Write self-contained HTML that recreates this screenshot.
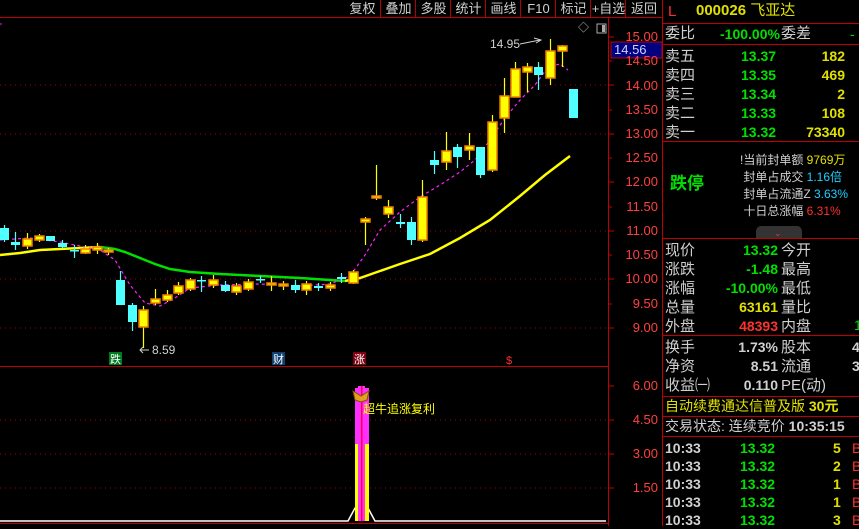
<!DOCTYPE html>
<html><head><meta charset="utf-8"><style>
body{margin:0;background:#000;width:859px;height:526px;overflow:hidden;position:relative;font-family:"Liberation Sans","Noto Sans CJK SC",sans-serif;}
.t{position:absolute;white-space:nowrap;font-size:14px;line-height:16px;}
.w{color:#d0d0d0}.g{color:#00e000}.y{color:#e0e000}.r{color:#ff3030}.c{color:#20d0ff}
.tb{position:absolute;top:0;height:17px;font-size:13px;line-height:17px;color:#d0d0d0;text-align:center;border-left:1px solid #b00000}
.hl{position:absolute;left:662px;width:197px;height:1px;background:#c00000}
.ax{position:absolute;left:612px;width:46px;text-align:right;font-size:13px;color:#ff4040;line-height:14px}
</style></head><body>
<svg width="859" height="526" style="position:absolute;left:0;top:0">
<line x1="0" y1="17.5" x2="662" y2="17.5" stroke="#c00000"/>
<line x1="608.5" y1="18" x2="608.5" y2="526" stroke="#c00000"/>
<line x1="662.5" y1="0" x2="662.5" y2="526" stroke="#c00000"/>
<line x1="0" y1="366.5" x2="608" y2="366.5" stroke="#c00000"/>
<line x1="0" y1="523.5" x2="608" y2="523.5" stroke="#c00000"/>
<g stroke="#a00000" stroke-dasharray="1,4">
<line x1="0" y1="85" x2="606" y2="85"/><line x1="0" y1="134" x2="606" y2="134"/>
<line x1="0" y1="231" x2="606" y2="231"/><line x1="0" y1="279" x2="606" y2="279"/>
<line x1="0" y1="328" x2="606" y2="328"/>
<line x1="0" y1="420" x2="606" y2="420"/><line x1="0" y1="454" x2="606" y2="454"/><line x1="0" y1="488" x2="606" y2="488"/>
</g>
<g stroke="#c00000">
<line x1="608" y1="37" x2="614" y2="37"/><line x1="608" y1="61" x2="612" y2="61"/><line x1="608" y1="85" x2="614" y2="85"/><line x1="608" y1="110" x2="612" y2="110"/><line x1="608" y1="134" x2="614" y2="134"/><line x1="608" y1="158" x2="612" y2="158"/><line x1="608" y1="182" x2="614" y2="182"/><line x1="608" y1="207" x2="612" y2="207"/><line x1="608" y1="231" x2="614" y2="231"/><line x1="608" y1="255" x2="612" y2="255"/><line x1="608" y1="279" x2="614" y2="279"/><line x1="608" y1="304" x2="612" y2="304"/><line x1="608" y1="328" x2="614" y2="328"/>
<line x1="608" y1="386" x2="614" y2="386"/><line x1="608" y1="420" x2="614" y2="420"/><line x1="608" y1="454" x2="614" y2="454"/><line x1="608" y1="488" x2="614" y2="488"/>
</g>
<!-- MA lines -->
<polyline fill="none" stroke="#ffff00" stroke-width="2.5" points="0,255 20,253 40,250 60,249 80,248 100,247"/>
<polyline fill="none" stroke="#00e000" stroke-width="2.5" points="100,247 115,249 125,252 140,258 155,264 170,269 190,272 220,274 260,276 300,278 345,281"/>
<polyline fill="none" stroke="#ffff00" stroke-width="2.5" points="345,281 360,278 380,271 400,264 430,254 460,238 490,220 520,196 545,175 570,156"/>
<polyline fill="none" stroke="#ff20ff" stroke-width="1.2" stroke-dasharray="3,3" points="0,240 30,238 60,242 100,250 115,260 130,285 145,303 160,306 175,298 190,288 220,285 260,284 300,286 330,284 350,276 365,255 380,230 400,212 420,197 440,185 460,172 475,160 490,140 505,118 520,100 535,85 548,67 560,64 568,70"/>
<!-- candles -->
<g id="cd"></g>
<!-- annotations -->
<text x="490" y="48" fill="#d0d0d0" font-size="12" font-family="Liberation Sans">14.95</text>
<path d="M520 44 L540 40 M534 38 L541 40 L536 43" stroke="#d0d0d0" fill="none"/>
<text x="152" y="354" fill="#d0d0d0" font-size="12" font-family="Liberation Sans">8.59</text>
<path d="M149 350 L140 350 M143 347 L140 350 L143 353" stroke="#d0d0d0" fill="none"/>
<rect x="109" y="352" width="13" height="13" fill="#007a20"/><text x="110" y="363" fill="#fff" font-size="11" font-family="Noto Sans CJK SC">跌</text>
<rect x="272" y="352" width="13" height="13" fill="#104070"/><text x="273" y="363" fill="#fff" font-size="11" font-family="Noto Sans CJK SC">财</text>
<rect x="353" y="352" width="13" height="13" fill="#800010"/><text x="354" y="363" fill="#fff" font-size="11" font-family="Noto Sans CJK SC">涨</text>
<text x="506" y="364" fill="#ff3030" font-size="11" font-family="Liberation Sans">$</text>
<!-- indicator -->
<polyline fill="none" stroke="#fff" stroke-width="1.5" points="0,521 348,521 355,508 368,508 375,521 606,521"/>
<rect x="355" y="388" width="14" height="133" fill="#ffff00"/>
<rect x="355" y="388" width="14" height="56" fill="#ff30ff"/>
<rect x="358" y="386" width="7" height="135" fill="#ff30ff"/>
<rect x="361" y="386" width="1.5" height="135" fill="#ff0040"/>
<path d="M353 391 L361 396 L369 391 L367 400 L361 402 L355 400Z" fill="#e0a020" stroke="#805000"/>
<text x="363" y="413" fill="#ffff00" font-size="12" font-family="Noto Sans CJK SC">超牛追涨复利</text>
<text x="578" y="31" fill="#bbb" font-size="11">◇</text>
<rect x="597" y="24" width="9" height="9" fill="none" stroke="#aaa"/><rect x="602" y="25" width="3" height="7" fill="#aaa"/>
<rect x="611" y="42" width="51" height="16" fill="#000080" stroke="#c00000"/>
<text x="0" y="30" fill="#ff30ff" font-size="10">'</text>
</svg>
<script>
var C=[[0,228,240,225,242,'c'],[11,242,245,232,250,'c'],[23,239,246,233,249,'y'],[35,236,240,234,242,'y'],[46,236,241,236,241,'c'],[58,243,247,240,248,'c'],[70,250,251,245,258,'c'],[81,249,253,245,254,'y'],[93,247,250,243,254,'y'],[104,250,252,248,255,'y'],
[116,280,305,271,305,'c'],[128,305,322,303,331,'c'],[139,310,327,306,348,'y'],[151,299,303,289,305,'y'],[163,295,300,290,302,'y'],[174,286,293,282,295,'y'],[186,280,289,278,291,'y'],[197,280,281,276,292,'c'],[209,280,285,275,288,'y'],[221,285,291,281,292,'c'],[232,286,292,283,295,'y'],[244,282,289,279,291,'y'],[256,279,280,276,283,'c'],[267,283,285,276,291,'y'],[279,284,286,281,290,'y'],[291,285,290,280,293,'c'],[302,284,290,281,295,'y'],[314,286,288,283,291,'c'],[326,285,288,282,291,'y'],[337,277,279,273,283,'c'],[349,272,283,270,284,'y'],
[361,219,222,217,245,'y'],[372,196,198,165,200,'y'],[384,207,214,200,218,'y'],[396,222,224,214,228,'c'],[407,222,240,217,245,'c'],[418,197,240,180,242,'y'],[430,160,165,151,174,'c'],[442,151,162,132,170,'y'],[453,147,157,144,168,'c'],[465,146,150,133,160,'y'],[476,147,175,147,178,'c'],[488,122,170,115,172,'y'],[500,96,118,78,133,'y'],[511,69,97,62,97,'y'],[523,67,72,63,92,'y'],[534,67,75,62,90,'c'],[546,51,78,39,85,'y'],[558,46,51,45,67,'y'],[569,89,118,89,118,'c']];
var s='';C.forEach(function(a){var x=a[0],col=a[5]=='c'?'#50ffff':'#ffff00';
s+='<line x1="'+(x+4.5)+'" y1="'+a[3]+'" x2="'+(x+4.5)+'" y2="'+a[4]+'" stroke="'+col+'" stroke-width="1.2"/>';
if(a[5]=='y'){s+='<rect x="'+x+'" y="'+a[1]+'" width="9" height="'+Math.max(1,a[2]-a[1])+'" fill="#ffff00" stroke="#f08000" stroke-width="1.5"/>';}
else{s+='<rect x="'+x+'" y="'+a[1]+'" width="9" height="'+Math.max(1.5,a[2]-a[1])+'" fill="#50ffff"/>';}});
document.getElementById('cd').innerHTML=s;
</script>
<!-- toolbar -->
<div class="tb" style="left:345px;width:35px;border-left:none">复权</div>
<div class="tb" style="left:380px;width:35px">叠加</div>
<div class="tb" style="left:415px;width:35px">多股</div>
<div class="tb" style="left:450px;width:35px">统计</div>
<div class="tb" style="left:485px;width:35px">画线</div>
<div class="tb" style="left:520px;width:35px">F10</div>
<div class="tb" style="left:555px;width:35px">标记</div>
<div class="tb" style="left:590px;width:35px">+自选</div>
<div class="tb" style="left:625px;width:36px">返回</div>
<!-- axis -->
<div class="ax" style="top:30px">15.00</div><div class="ax" style="top:54px">14.50</div>
<div class="ax" style="top:79px;width:46px">14.00</div><div class="ax" style="top:103px">13.50</div>
<div class="ax" style="top:127px">13.00</div><div class="ax" style="top:151px">12.50</div>
<div class="ax" style="top:175px">12.00</div><div class="ax" style="top:200px">11.50</div>
<div class="ax" style="top:224px">11.00</div><div class="ax" style="top:248px">10.50</div>
<div class="ax" style="top:272px">10.00</div><div class="ax" style="top:297px">9.50</div>
<div class="ax" style="top:321px">9.00</div>
<div class="ax" style="top:379px">6.00</div><div class="ax" style="top:413px">4.50</div>
<div class="ax" style="top:447px">3.00</div><div class="ax" style="top:481px">1.50</div>
<div class="t" style="left:614px;top:42px;color:#d0d0ff;font-size:13px">14.56</div>
<!-- right panel -->
<div class="t r" style="left:668px;top:4px;font-size:15px">L</div>
<div class="t y" style="left:696px;top:3px;font-size:15px;font-weight:bold">000026 <span style="font-weight:normal">飞亚达</span></div>
<div class="hl" style="top:23px"></div>
<div class="t w" style="left:665px;top:26px;font-size:15px">委比</div>
<div class="t g" style="left:720px;top:26px;font-weight:bold">-100.00%</div>
<div class="t w" style="left:781px;top:26px;font-size:15px">委差</div>
<div class="t g" style="left:850px;top:26px">-</div>
<div class="hl" style="top:44px"></div>
<div class="t w" style="left:665px;top:47px;font-size:15px;line-height:19px">卖五<br>卖四<br>卖三<br>卖二<br>卖一</div>
<div class="t g" style="left:741px;top:47px;line-height:19px;font-weight:bold">13.37<br>13.35<br>13.34<br>13.33<br>13.32</div>
<div class="t y" style="left:785px;top:47px;width:60px;text-align:right;line-height:19px;font-weight:bold">182<br>469<br>2<br>108<br>73340</div>
<div class="hl" style="top:141px"></div>
<div class="t g" style="left:670px;top:174px;font-size:17px;font-weight:bold;line-height:20px">跌停</div>
<div class="t w" style="left:740px;top:152px;font-size:12px;line-height:17px;text-align:left">!当前封单额 <span class="y">9769万</span><br>&nbsp;封单占成交 <span class="c">1.16倍</span><br>&nbsp;封单占流通Z <span class="c">3.63%</span><br>&nbsp;十日总涨幅 <span class="r">6.31%</span></div>
<div style="position:absolute;left:756px;top:226px;width:46px;height:13px;background:#333;border-radius:5px 5px 0 0"></div>
<div class="t r" style="left:774px;top:225px;font-size:9px">⌄</div>
<div class="hl" style="top:238px"></div>
<div class="t w" style="left:665px;top:241px;font-size:15px;line-height:19px">现价<br>涨跌<br>涨幅<br>总量<br>外盘</div>
<div class="t" style="left:700px;top:241px;width:78px;text-align:right;line-height:19px;font-weight:bold"><span class="g">13.32</span><br><span class="g">-1.48</span><br><span class="g">-10.00%</span><br><span class="y">63161</span><br><span class="r">48393</span></div>
<div class="t w" style="left:781px;top:241px;font-size:15px;line-height:19px">今开<br>最高<br>最低<br>量比<br>内盘</div>
<div class="t g" style="left:854px;top:317px">1</div>
<div class="hl" style="top:335px"></div>
<div class="t w" style="left:665px;top:338px;font-size:15px;line-height:19px">换手<br>净资<br>收益㈠</div>
<div class="t w" style="left:700px;top:338px;width:78px;text-align:right;line-height:19px;font-weight:bold">1.73%<br>8.51<br>0.110</div>
<div class="t w" style="left:781px;top:338px;font-size:15px;line-height:19px">股本<br>流通<br>PE(动)</div>
<div class="t w" style="left:852px;top:338px;line-height:19px;font-weight:bold">4<br>3</div>
<div class="hl" style="top:396px"></div>
<div class="t y" style="left:665px;top:398px;font-size:14px">自动续费通达信普及版 <b>30元</b></div>
<div class="hl" style="top:416px"></div>
<div class="t w" style="left:665px;top:418px;font-size:14px">交易状态: 连续竞价 <b>10:35:15</b></div>
<div class="hl" style="top:436px"></div>
<div class="t w" style="left:665px;top:439px;line-height:18px;font-weight:bold">10:33<br>10:33<br>10:33<br>10:33<br>10:33</div>
<div class="t g" style="left:740px;top:439px;line-height:18px;font-weight:bold">13.32<br>13.32<br>13.32<br>13.32<br>13.32</div>
<div class="t y" style="left:833px;top:439px;line-height:18px;font-weight:bold">5<br>2<br>1<br>1<br>3</div>
<div class="t r" style="left:852px;top:439px;line-height:18px">B<br>B<br>B<br>B<br>B</div>
</body></html>
